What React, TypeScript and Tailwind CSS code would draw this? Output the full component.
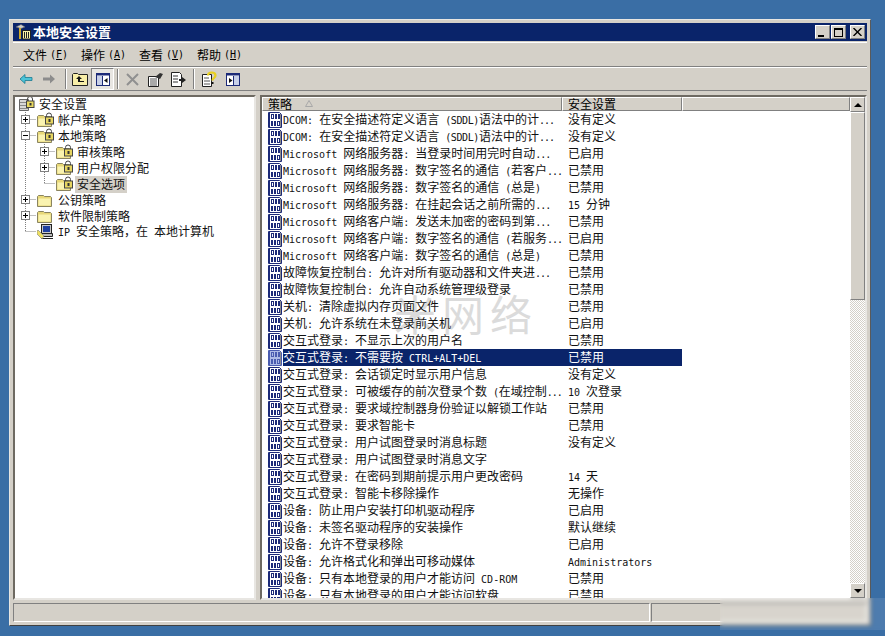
import React from "react";

const SONG = "font-['Noto_Sans_CJK_SC','Noto_Sans',sans-serif]";
const MONO = "font-['DejaVu_Sans_Mono',monospace] text-[10px] whitespace-pre";

// latin runs in the screenshot are 6px wide per char, like a bitmap font
function Txt({ t }: { t: string }) {
  const parts = t.split(/(\.\.\.|\([\x20-\x7e]*\)|[\x20-\x7e]+?(?=\.\.\.|\(|[^\x20-\x7e]|$))/).filter(Boolean);
  return (
    <>
      {parts.map((p, i) => {
        if (p === "...") {
          return (
            <span key={i} className={`${MONO} tracking-[-1px]`}>
              {p}
            </span>
          );
        }
        if (p.startsWith("(")) {
          return (
            <span key={i} className={`${MONO} tracking-[-0.4px]`}>
              {p}
            </span>
          );
        }
        return /^[\x20-\x7e]+$/.test(p) ? (
          <span key={i} className={MONO}>
            {p}
          </span>
        ) : (
          <span key={i}>{p}</span>
        );
      })}
    </>
  );
}

function PolicyIcon({ selected }: { selected?: boolean }) {
  const c = selected ? "#4a5cb0" : "#1c2a78";
  return (
    <svg width="16" height="16" viewBox="0 0 16 16" className="shrink-0">
      <path d="M1.500 .5h11l2 2v13h-13z" fill={selected ? "#aebbe6" : "#fff"} stroke={c} />
      <path d="M1 1h2v14H1z" fill={c} />
      <path d="M13.500 2v13" stroke="#8c8c8c" />
      {/* top row 0 1 1 */}
      <rect x="4.500" y="2.500" width="2" height="4" fill="none" stroke={c} />
      <rect x="8" y="2" width="2" height="5" fill={c} />
      <rect x="11" y="2" width="2" height="5" fill={c} />
      {/* bottom row 1 1 0 */}
      <rect x="4" y="9" width="2" height="5" fill={c} />
      <rect x="7" y="9" width="2" height="5" fill={c} />
      <rect x="10.500" y="9.500" width="2" height="4" fill="none" stroke={c} />
    </svg>
  );
}

function Folder({ lock }: { lock?: boolean }) {
  return (
    <svg width="17" height="16" viewBox="0 0 17 16" className="shrink-0">
      <path d="M.5 14.500v-10l1-1h5l1 1h6l1 1v9z" fill="#e8d878" stroke="#8a8460" />
      <path d="M1.500 13.500v-7h12v7z" fill="#faf3b0" />
      {lock && (
        <>
          <path d="M9.500 5V3.500a2.500 2.500 0 015 0V5" fill="none" stroke="#444" />
          <rect x="8.500" y="5" width="8" height="7" fill="#e6d560" stroke="#444" />
          <rect x="11.500" y="7" width="2" height="3" fill="#333" />
        </>
      )}
    </svg>
  );
}

function RootIcon() {
  return (
    <svg width="17" height="16" viewBox="0 0 17 16" className="shrink-0">
      <path d="M1.500 3.500h9v11h-9z" fill="#d8d8d8" stroke="#666" />
      <path d="M2 6.500h8M2 9.500h8M2 12.500h8" stroke="#888" />
      <path d="M9.500 5V3a2.500 2.500 0 015 0v2" fill="none" stroke="#444" />
      <rect x="8.500" y="5" width="7.500" height="6.500" fill="#e8d860" stroke="#444" />
      <rect x="11.500" y="7" width="2" height="2.500" fill="#333" />
    </svg>
  );
}

function PcIcon() {
  return (
    <svg width="17" height="16" viewBox="0 0 17 16" className="shrink-0">
      <rect x="4.500" y=".5" width="10" height="9" fill="#c8c8c8" stroke="#222" />
      <rect x="6" y="2" width="7" height="6" fill="#2040a0" />
      <path d="M4.500 9.500h11v3h-11z" fill="#bbb" stroke="#222" />
      <path d="M4 14.500h12" stroke="#222" />
      <path d="M0 7l1-1 6 6-2 3-5-5z" fill="#eee060" stroke="#888" strokeWidth=".7" />
    </svg>
  );
}

// connector cell of the tree: one cell per depth
function Guide({ kind }: { kind: "pipe" | "tee" | "end" | "plus" | "minus" | "plusEnd" | "blank" }) {
  const dot = "#808080";
  const vUp = kind !== "blank";
  const vDown = kind === "pipe" || kind === "tee" || kind === "plus" || kind === "minus";
  const h = kind !== "pipe" && kind !== "blank";
  const box = kind === "plus" || kind === "minus" || kind === "plusEnd";
  return (
    <svg width="19" height="16" viewBox="0 0 19 16" className="shrink-0">
      {vUp && <path d={`M7.500 0V${vDown ? 16 : 8}`} stroke={dot} strokeDasharray="1 1" />}
      {h && <path d="M7.500 7.500H18" stroke={dot} strokeDasharray="1 1" />}
      {box && (
        <>
          <rect x="3.500" y="3.500" width="8" height="8" fill="#fff" stroke="#808080" />
          <path d="M5 7.500h5" stroke="#000" />
          {kind !== "minus" && <path d="M7.500 5v5" stroke="#000" />}
        </>
      )}
    </svg>
  );
}

type Tree = { guides: React.ComponentProps<typeof Guide>["kind"][]; icon: React.ReactNode; label: string; sel?: boolean };

const tree: Tree[] = [
  { guides: [], icon: <RootIcon />, label: "安全设置" },
  { guides: ["plus"], icon: <Folder lock />, label: "帐户策略" },
  { guides: ["minus"], icon: <Folder lock />, label: "本地策略" },
  { guides: ["pipe", "plus"], icon: <Folder lock />, label: "审核策略" },
  { guides: ["pipe", "plus"], icon: <Folder lock />, label: "用户权限分配" },
  { guides: ["pipe", "end"], icon: <Folder lock />, label: "安全选项", sel: true },
  { guides: ["plus"], icon: <Folder />, label: "公钥策略" },
  { guides: ["plus"], icon: <Folder />, label: "软件限制策略" },
  { guides: ["end"], icon: <PcIcon />, label: "IP 安全策略，在 本地计算机" },
];

const rows: [string, string][] = [
  ["DCOM: 在安全描述符定义语言 (SDDL)语法中的计...", "没有定义"],
  ["DCOM: 在安全描述符定义语言 (SDDL)语法中的计...", "没有定义"],
  ["Microsoft 网络服务器: 当登录时间用完时自动...", "已启用"],
  ["Microsoft 网络服务器: 数字签名的通信 (若客户...", "已禁用"],
  ["Microsoft 网络服务器: 数字签名的通信 (总是)", "已禁用"],
  ["Microsoft 网络服务器: 在挂起会话之前所需的...", "15 分钟"],
  ["Microsoft 网络客户端: 发送未加密的密码到第...", "已禁用"],
  ["Microsoft 网络客户端: 数字签名的通信 (若服务...", "已启用"],
  ["Microsoft 网络客户端: 数字签名的通信 (总是)", "已禁用"],
  ["故障恢复控制台: 允许对所有驱动器和文件夹进...", "已禁用"],
  ["故障恢复控制台: 允许自动系统管理级登录", "已禁用"],
  ["关机: 清除虚拟内存页面文件", "已禁用"],
  ["关机: 允许系统在未登录前关机", "已启用"],
  ["交互式登录: 不显示上次的用户名", "已禁用"],
  ["交互式登录: 不需要按 CTRL+ALT+DEL", "已禁用"],
  ["交互式登录: 会话锁定时显示用户信息", "没有定义"],
  ["交互式登录: 可被缓存的前次登录个数 (在域控制...", "10 次登录"],
  ["交互式登录: 要求域控制器身份验证以解锁工作站", "已禁用"],
  ["交互式登录: 要求智能卡", "已禁用"],
  ["交互式登录: 用户试图登录时消息标题", "没有定义"],
  ["交互式登录: 用户试图登录时消息文字", ""],
  ["交互式登录: 在密码到期前提示用户更改密码", "14 天"],
  ["交互式登录: 智能卡移除操作", "无操作"],
  ["设备: 防止用户安装打印机驱动程序", "已启用"],
  ["设备: 未签名驱动程序的安装操作", "默认继续"],
  ["设备: 允许不登录移除", "已启用"],
  ["设备: 允许格式化和弹出可移动媒体", "Administrators"],
  ["设备: 只有本地登录的用户才能访问 CD-ROM", "已禁用"],
  ["设备: 只有本地登录的用户才能访问软盘", "已禁用"],
];

const raised = "border border-t-white border-l-white border-r-[#808080] border-b-[#808080]";
const sunken = "border-2 border-t-[#6e6a62] border-l-[#6e6a62] border-r-[#e8e6e2] border-b-[#e8e6e2] bg-white";

function Sep({ className }: { className: string }) {
  return <div className={`h-[20px] w-[2px] border-l border-l-[#808080] border-r border-r-white ${className}`} />;
}

function ToolIcon({ children, active }: { children: React.ReactNode; active?: boolean }) {
  return (
    <div
      className={`flex h-[22px] w-[23px] items-center justify-center ${
        active ? "border border-t-[#808080] border-l-[#808080] border-r-white border-b-white bg-[#e8e6e2]" : ""
      }`}
    >
      {children}
    </div>
  );
}

function Menu({ label, k }: { label: string; k: string }) {
  return (
    <div className="flex w-[58px] items-center text-[12px] text-black">
      <span>{label}</span>
      <span className={`ml-[3px] ${MONO}`}>
        (<span className="underline">{k}</span>)
      </span>
    </div>
  );
}

function TitleBtn({ children }: { children: React.ReactNode }) {
  return (
    <div className={`flex h-[14px] w-[15px] items-center justify-center bg-[#d4d0c8] ${raised}`}>{children}</div>
  );
}

export default function App() {
  return (
    <div className={`relative h-[636px] w-[885px] overflow-hidden bg-[#3a6ea5] pl-[9px] pt-[19px] ${SONG}`}>
      <div className="flex h-[607px] w-[862px] flex-col border border-t-[#e8e6e2] border-l-[#e8e6e2] border-r-[#5a5a5a] border-b-[#404040] bg-[#d4d0c8] p-[3px]">
        {/* title bar */}
        <div className="flex h-[18px] shrink-0 items-center bg-[#0a246a] pl-[3px] pr-[2px]">
          <svg width="16" height="16" viewBox="0 0 16 16" className="shrink-0">
            <path d="M0 3l5-2.500 4 2.500-4 1.500z" fill="#d0d0d0" stroke="#666" strokeWidth=".6" />
            <path d="M4 4v11" stroke="#d0a828" strokeWidth="2" />
            <rect x="6.500" y="6.500" width="8" height="8.500" fill="#f8f0a8" stroke="#222" />
            <path d="M8.500 8v6M10.500 8v6M12.500 8v6" stroke="#222" />
          </svg>
          <span className="ml-[1px] text-[13px] font-bold text-white">本地安全设置</span>
          <div className="ml-auto flex items-center">
            <TitleBtn>
              <div className="mr-[3px] mt-[7px] h-[2px] w-[6px] bg-black" />
            </TitleBtn>
            <div className="w-[1px]" />
            <TitleBtn>
              <div className="h-[9px] w-[9px] border border-t-2 border-black" />
            </TitleBtn>
            <div className="w-[4px]" />
            <TitleBtn>
              <svg width="9" height="8" viewBox="0 0 9 8">
                <path d="M.5 0l8 8M8.500 0l-8 8" stroke="#000" strokeWidth="1.400" />
              </svg>
            </TitleBtn>
          </div>
        </div>

        {/* menu */}
        <div className="mt-[1px] flex h-[25px] shrink-0 items-center border-b border-t border-b-[#808080] border-t-white pl-[10px]">
          <Menu label="文件" k="F" />
          <Menu label="操作" k="A" />
          <Menu label="查看" k="V" />
          <Menu label="帮助" k="H" />
        </div>

        {/* toolbar */}
        <div className="flex h-[24px] shrink-0 items-center border-b border-t border-b-[#808080] border-t-white pl-[1px]">
          <ToolIcon>
            <svg width="14" height="10" viewBox="0 0 14 10">
              <path d="M1 5l5-4.500v3h7v3H6v3z" fill="#4cc4d8" stroke="#1a7a90" strokeWidth=".8" />
            </svg>
          </ToolIcon>
          <ToolIcon>
            <svg width="14" height="10" viewBox="0 0 14 10">
              <path d="M13 5L8 .5v3H1v3h7v3z" fill="#8c8c8c" />
            </svg>
          </ToolIcon>
          <Sep className="ml-[5px] mr-[1px]" />
          <ToolIcon>
            <svg width="16" height="14" viewBox="0 0 16 14">
              <path d="M.5 13.500v-11l1-1h4l1 1h9v11z" fill="#f8eea8" stroke="#222" />
              <path d="M7 4L4 7h2v3h6V9H8V7h2z" fill="#111" />
            </svg>
          </ToolIcon>
          <ToolIcon active>
            <svg width="14" height="13" viewBox="0 0 14 13">
              <rect x=".5" y=".5" width="13" height="12" fill="#fff" stroke="#1c2a78" />
              <rect x=".5" y=".5" width="13" height="2" fill="#1c2a78" />
              <rect x="1" y="3" width="5" height="9" fill="#c8d0e8" />
              <path d="M6.500 3v9" stroke="#1c2a78" />
              <path d="M11.500 5v5L8 7.500z" fill="#111" />
            </svg>
          </ToolIcon>
          <Sep className="ml-[3px] mr-[2px]" />
          <ToolIcon>
            <svg width="13" height="13" viewBox="0 0 13 13">
              <path d="M1 1l11 11M12 1L1 12" stroke="#909090" strokeWidth="2" />
            </svg>
          </ToolIcon>
          <ToolIcon>
            <svg width="16" height="15" viewBox="0 0 16 15">
              <path d="M.5 4.500h10v10H.5z" fill="#fff" stroke="#222" />
              <path d="M2 7h7M2 9h7M2 11h7M2 13h7" stroke="#555" />
              <path d="M7 5l5-4 3 1-3 5z" fill="#333" />
            </svg>
          </ToolIcon>
          <ToolIcon>
            <svg width="15" height="15" viewBox="0 0 15 15">
              <path d="M.5.5h8l2 2v12H.5z" fill="#fff" stroke="#222" />
              <path d="M2 4h5M2 7h5M2 10h5" stroke="#333" />
              <path d="M8 7h3V5l4 3-4 3V9H8z" fill="#222" />
            </svg>
          </ToolIcon>
          <Sep className="ml-[3px] mr-[3px]" />
          <ToolIcon>
            <svg width="15" height="16" viewBox="0 0 15 16">
              <path d="M.5 3.500h9v12h-9z" fill="#fff" stroke="#222" />
              <path d="M2 7h5M2 10h6M2 13h6" stroke="#555" />
              <path d="M6 4.500C6 .5 13.500 .5 13.500 4.500c0 2.500-3 2.500-3 5" fill="none" stroke="#e8d020" strokeWidth="2.200" />
              <rect x="9.500" y="11" width="2" height="2" fill="#111" />
            </svg>
          </ToolIcon>
          <ToolIcon>
            <svg width="14" height="13" viewBox="0 0 14 13">
              <rect x=".5" y=".5" width="13" height="12" fill="#fff" stroke="#1c2a78" />
              <rect x=".5" y=".5" width="13" height="2" fill="#1c2a78" />
              <rect x="8" y="3" width="5" height="9" fill="#c8d0e8" />
              <path d="M7.500 3v9" stroke="#1c2a78" />
              <path d="M3 5v5l3.500-2.500z" fill="#111" />
            </svg>
          </ToolIcon>
        </div>

        {/* panes */}
        <div className="mt-[4px] flex min-h-0 flex-1 gap-[4px]">
          <div className={`w-[243px] shrink-0 overflow-hidden pl-[3px] ${sunken}`}>
            <div className="-mt-[1px]">
              {tree.map((n, i) => (
                <div key={i} className="flex h-[16px] items-center text-[12px] leading-[16px] text-[#111]">
                  {n.guides.map((g, j) => (
                    <Guide key={j} kind={g} />
                  ))}
                  {n.icon}
                  <span className={`ml-[2px] whitespace-pre px-[2px] pb-[1px] ${n.sel ? "bg-[#d4d0c8]" : ""}`}>
                    <Txt t={n.label} />
                  </span>
                </div>
              ))}
            </div>
          </div>

          <div className={`relative flex min-w-0 flex-1 overflow-hidden ${sunken}`}>
            <div className="flex min-w-0 flex-1 flex-col">
              <div className="flex h-[14px] shrink-0 text-[12px] leading-[12px] text-black">
                <div className={`flex w-[300px] items-center bg-[#d4d0c8] pb-[1px] pl-[5px] ${raised}`}>
                  <span>策略</span>
                  <svg width="8" height="7" viewBox="0 0 8 7" className="ml-[13px]">
                    <path d="M4 .5L7.500 6.500H.5z" fill="none" stroke="#a8a8a8" />
                  </svg>
                </div>
                <div className={`flex w-[120px] items-center bg-[#d4d0c8] pb-[1px] pl-[5px] ${raised}`}>安全设置</div>
                <div className={`flex-1 bg-[#d4d0c8] ${raised}`} />
              </div>
              <div className="min-h-0 flex-1 overflow-hidden">
                {rows.map(([a, b], i) => {
                  const sel = i === 14;
                  return (
                    <div key={i} className="flex h-[17px] items-center text-[12px] leading-[15px] text-[#111]">
                      <div className="ml-[5px] flex w-[295px] items-center">
                        <PolicyIcon selected={sel} />
                        <span className={`flex h-[17px] flex-1 items-start whitespace-pre ${sel ? "bg-[#0a246a] text-white" : ""}`}>
                          <span>
                            <Txt t={a} />
                          </span>
                        </span>
                      </div>
                      <div className={`h-[17px] w-[120px] whitespace-pre pl-[6px] ${sel ? "bg-[#0a246a] text-white" : ""}`}>
                        <Txt t={b} />
                      </div>
                    </div>
                  );
                })}
              </div>
            </div>

            {/* scrollbar */}
            <div className="flex w-[15px] shrink-0 flex-col bg-[repeating-conic-gradient(#d4d0c8_0_25%,#ffffff_0_50%)] bg-[length:2px_2px]">
              <div className={`flex h-[15px] shrink-0 items-center justify-center bg-[#d4d0c8] ${raised}`}>
                <div className="h-0 w-0 border-x-[4px] border-b-[4px] border-x-transparent border-b-black" />
              </div>
              <div className={`h-[188px] shrink-0 bg-[#d4d0c8] ${raised}`} />
              <div className="flex-1" />
              <div className={`flex h-[15px] shrink-0 items-center justify-center bg-[#d4d0c8] ${raised}`}>
                <div className="h-0 w-0 border-x-[4px] border-t-[4px] border-x-transparent border-t-black" />
              </div>
            </div>

            {/* site watermark over the list */}
            <div className="pointer-events-none absolute left-[132px] top-[194px] whitespace-pre text-[42px] leading-[44px] tracking-[6px] text-[#8a8a8a] opacity-30">
              米网络
            </div>
          </div>
        </div>

        {/* status bar */}
        <div className="mt-[3px] flex h-[19px] shrink-0 gap-[1px]">
          <div className="w-[637px] border border-b-white border-l-[#808080] border-r-white border-t-[#808080]" />
          <div className="flex-1 border border-b-white border-l-[#808080] border-r-white border-t-[#808080]" />
        </div>
      </div>

      {/* smeared corner of the photo */}
      <div className="pointer-events-none absolute left-[720px] top-[598px] h-[32px] w-[165px] bg-white/10 backdrop-blur-[2px]" />
    </div>
  );
}
